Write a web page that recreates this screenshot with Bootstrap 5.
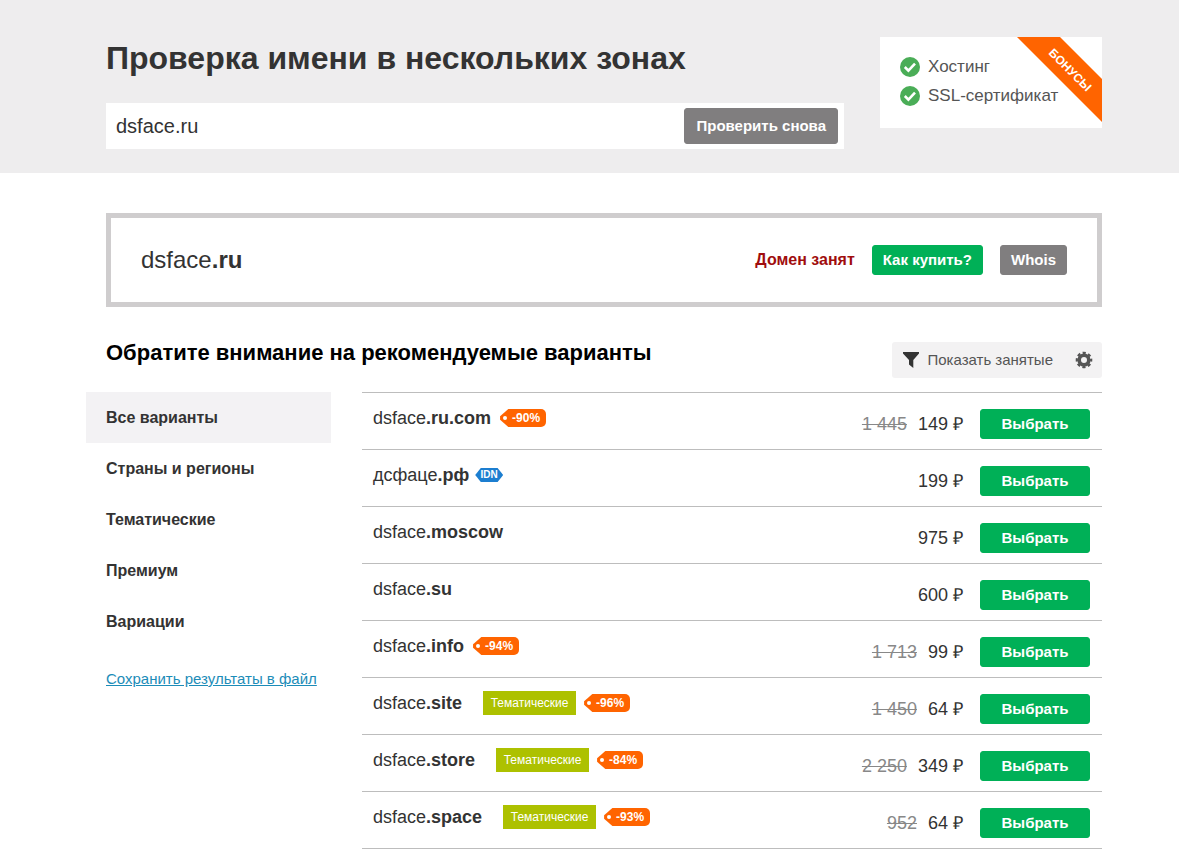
<!DOCTYPE html>
<html lang="ru">
<head>
<meta charset="utf-8">
<meta name="viewport" content="width=device-width, initial-scale=1">
<title>Проверка имени в нескольких зонах</title>
<link href="https://cdn.jsdelivr.net/npm/bootstrap@5.3.0/dist/css/bootstrap.min.css" rel="stylesheet">
<style>
  body { font-family: "Liberation Sans", Arial, sans-serif; font-size: 18px; line-height: 24px; color: #333; background: #fff; }
  .page-wrap { padding-left: 106px; padding-right: 77px; }
  .hero { background: #eeedee; padding-top: 37px; padding-bottom: 24px; }
  .hero h1 { font-size: 32px; line-height: 42px; font-weight: 700; margin-bottom: 24px; }
  .search-box { background: #fff; padding: 5px 6px 5px 0; }
  .search-box .form-control { border: 0; border-radius: 0; background: none; font-size: 20px; line-height: 24px; padding: 6px 10px; color: #333; }
  .btn { --bs-btn-font-weight: 700; --bs-btn-font-size: 15px; --bs-btn-line-height: 20px; --bs-btn-padding-x: 10px; --bs-btn-padding-y: 4px; --bs-btn-border-radius: 3px; }
  .btn-buy { --bs-btn-color: #fff; --bs-btn-bg: #00b057; --bs-btn-border-color: #00b057; --bs-btn-hover-color: #fff; --bs-btn-hover-bg: #009c4d; --bs-btn-hover-border-color: #009c4d; }
  .btn-gray { --bs-btn-color: #fff; --bs-btn-bg: #807e7f; --bs-btn-border-color: #807e7f; --bs-btn-hover-color: #fff; --bs-btn-hover-bg: #6d6b6c; --bs-btn-hover-border-color: #6d6b6c; }
  .search-box .btn { --bs-btn-padding-y: 7px; --bs-btn-padding-x: 11px; }
  .bonus { width: 222px; background: #fff; color: #555; font-size: 17px; line-height: 20px; padding: 20px 20px 22px; }
  .bonus-list { gap: 9px; }
  .bonus-ribbon { top: 0; right: 0; }
  .bonus-ribbon text { font: 700 12px "Liberation Sans", Arial, sans-serif; fill: #fff; }
  .domain-panel { border: 5px solid #cfcdce; margin-top: 40px; padding: 27px 30px; gap: 17px; }
  .domain-panel .domain { font-size: 24px; line-height: 30px; }
  .taken { color: #a00d0d; font-size: 16px; }
  .section-head { margin-top: 35px; margin-bottom: 14px; }
  .section-head h2 { font-size: 22px; line-height: 26px; font-weight: 700; color: #000; margin-top: -14px; }
  .filter-bar { background: #f3f2f3; border-radius: 3px; padding: 8px 9px 8px 11px; gap: 22px; }
  .filter-bar button { border: 0; background: none; padding: 0; font-size: 15px; line-height: 20px; color: #555; }
  .side { width: 245px; margin-left: -20px; margin-right: 31px; font-size: 16px; }
  .side .nav-link { color: #333; font-weight: 700; line-height: 19px; padding: 16px 20px; border-radius: 0; }
  .side .nav-link.active { background: #f3f2f4; color: #333; }
  .save-link { color: #1c8cb8; font-size: 15px; line-height: 20px; margin: 22px 0 0 20px; }
  .zones { --bs-table-color: #333; --bs-table-bg: transparent; border-top: 1px solid #bdbdbd; margin: 0; }
  .zones tr { border-bottom: 1px solid #bdbdbd; }
  .zones td { border: 0; padding: 13px 0 13px 11px; vertical-align: top; white-space: nowrap; }
  .zones .price-cell { padding-top: 19px; text-align: right; }
  .zones .pick-cell { width: 139px; padding: 16px 12px 10px 17px; }
  .old-price { color: #888; margin-right: 11px; }
  .discount, .idn { height: 18px; color: #fff; font-size: 12px; line-height: 18px; font-weight: 700; }
  .discount { width: 46px; padding-left: 12px; margin-left: 9px; background: #ff6400; border-radius: 0 5px 5px 0; clip-path: polygon(0 40%, 18% 0, 100% 0, 100% 100%, 18% 100%, 0 60%); }
  .discount::before { content: ""; position: absolute; left: 3px; top: 7px; width: 4px; height: 4px; border-radius: 50%; background: #fff; }
  .idn { width: 28px; height: 14px; line-height: 14px; font-size: 10px; margin-left: 6px; background: #1c7ed0; clip-path: polygon(0 50%, 20% 0, 80% 0, 100% 50%, 80% 100%, 20% 100%); }
  .topic { background: #adc100; color: #fff; font-size: 12px; line-height: 24px; width: 93px; margin-left: 21px; }
  .topic + .discount { margin-left: 8px; }
</style>
</head>
<body>

<header class="hero">
  <div class="page-wrap d-flex align-items-start">
    <div class="flex-grow-1 me-4 pe-2">
      <h1>Проверка имени в нескольких зонах</h1>
      <form class="search-box d-flex me-1">
        <input type="text" class="form-control shadow-none" aria-label="Имя домена" value="dsface.ru">
        <button type="button" class="btn btn-gray text-nowrap">Проверить снова</button>
      </form>
    </div>
    <aside class="bonus position-relative flex-shrink-0">
      <div class="bonus-list d-flex flex-column">
        <div class="d-flex align-items-center gap-2">
          <svg width="20" height="20" viewBox="0 0 20 20" aria-hidden="true"><circle cx="10" cy="10" r="10" fill="#4aad57"/><path d="M4.8 10l3.6 3.6 6.6-7" fill="none" stroke="#fff" stroke-width="2.6"/></svg>
          <span>Хостинг</span>
        </div>
        <div class="d-flex align-items-center gap-2">
          <svg width="20" height="20" viewBox="0 0 20 20" aria-hidden="true"><circle cx="10" cy="10" r="10" fill="#4aad57"/><path d="M4.8 10l3.6 3.6 6.6-7" fill="none" stroke="#fff" stroke-width="2.6"/></svg>
          <span>SSL-сертификат</span>
        </div>
      </div>
      <svg class="bonus-ribbon position-absolute" width="85" height="85" viewBox="0 0 85 85"><path d="M0 0h43l42 42v43z" fill="#ff6400"/><text transform="translate(53 33) rotate(45)" text-anchor="middle" y="4">БОНУСЫ</text></svg>
    </aside>
  </div>
</header>

<main class="page-wrap">
  <section class="domain-panel d-flex align-items-center">
    <div class="domain me-auto">dsface<b>.ru</b></div>
    <b class="taken">Домен занят</b>
    <button type="button" class="btn btn-buy">Как купить?</button>
    <button type="button" class="btn btn-gray">Whois</button>
  </section>

  <div class="section-head d-flex align-items-center justify-content-between">
    <h2 class="mb-0">Обратите внимание на рекомендуемые варианты</h2>
    <div class="filter-bar d-flex align-items-center">
      <button type="button" class="d-flex align-items-center gap-2">
        <svg width="16" height="16" viewBox="0 0 16 16" aria-hidden="true"><path d="M0 0h16v1.5L10.3 8v8L6 12.6V8L0 1.5z" fill="#333"/></svg>
        Показать занятые
      </button>
      <button type="button" class="d-flex" aria-label="Настройки">
        <svg width="18" height="18" viewBox="-9 -9 18 18" aria-hidden="true"><circle r="4.8" fill="none" stroke="#555" stroke-width="3.6"/><circle r="7.2" fill="none" stroke="#555" stroke-width="2.2" stroke-dasharray="3.2 2.455" stroke-dashoffset="1.6"/></svg>
      </button>
    </div>
  </div>

  <div class="d-flex align-items-start">
    <nav class="side flex-shrink-0" aria-label="Категории">
      <div class="nav nav-pills flex-column">
        <a class="nav-link active" href="#">Все варианты</a>
        <a class="nav-link" href="#">Страны и регионы</a>
        <a class="nav-link" href="#">Тематические</a>
        <a class="nav-link" href="#">Премиум</a>
        <a class="nav-link" href="#">Вариации</a>
      </div>
      <a class="save-link d-inline-block text-nowrap" href="#">Сохранить результаты в файл</a>
    </nav>

    <table class="table zones">
      <tbody>
        <tr>
          <td><div class="d-flex align-items-center">dsface<b>.ru.com</b><span class="discount position-relative">-90%</span></div></td>
          <td class="price-cell"><s class="old-price">1 445</s>149 ₽</td>
          <td class="pick-cell"><button type="button" class="btn btn-buy w-100">Выбрать</button></td>
        </tr>
        <tr>
          <td><div class="d-flex align-items-center">дсфаце<b>.рф</b><span class="idn text-center">IDN</span></div></td>
          <td class="price-cell">199 ₽</td>
          <td class="pick-cell"><button type="button" class="btn btn-buy w-100">Выбрать</button></td>
        </tr>
        <tr>
          <td>dsface<b>.moscow</b></td>
          <td class="price-cell">975 ₽</td>
          <td class="pick-cell"><button type="button" class="btn btn-buy w-100">Выбрать</button></td>
        </tr>
        <tr>
          <td>dsface<b>.su</b></td>
          <td class="price-cell">600 ₽</td>
          <td class="pick-cell"><button type="button" class="btn btn-buy w-100">Выбрать</button></td>
        </tr>
        <tr>
          <td><div class="d-flex align-items-center">dsface<b>.info</b><span class="discount position-relative">-94%</span></div></td>
          <td class="price-cell"><s class="old-price">1 713</s>99 ₽</td>
          <td class="pick-cell"><button type="button" class="btn btn-buy w-100">Выбрать</button></td>
        </tr>
        <tr>
          <td><div class="d-flex align-items-center">dsface<b>.site</b><span class="topic text-center">Тематические</span><span class="discount position-relative">-96%</span></div></td>
          <td class="price-cell"><s class="old-price">1 450</s>64 ₽</td>
          <td class="pick-cell"><button type="button" class="btn btn-buy w-100">Выбрать</button></td>
        </tr>
        <tr>
          <td><div class="d-flex align-items-center">dsface<b>.store</b><span class="topic text-center">Тематические</span><span class="discount position-relative">-84%</span></div></td>
          <td class="price-cell"><s class="old-price">2 250</s>349 ₽</td>
          <td class="pick-cell"><button type="button" class="btn btn-buy w-100">Выбрать</button></td>
        </tr>
        <tr>
          <td><div class="d-flex align-items-center">dsface<b>.space</b><span class="topic text-center">Тематические</span><span class="discount position-relative">-93%</span></div></td>
          <td class="price-cell"><s class="old-price">952</s>64 ₽</td>
          <td class="pick-cell"><button type="button" class="btn btn-buy w-100">Выбрать</button></td>
        </tr>
      </tbody>
    </table>
  </div>
</main>

<script src="https://cdn.jsdelivr.net/npm/bootstrap@5.3.0/dist/js/bootstrap.bundle.min.js"></script>
</body>
</html>
